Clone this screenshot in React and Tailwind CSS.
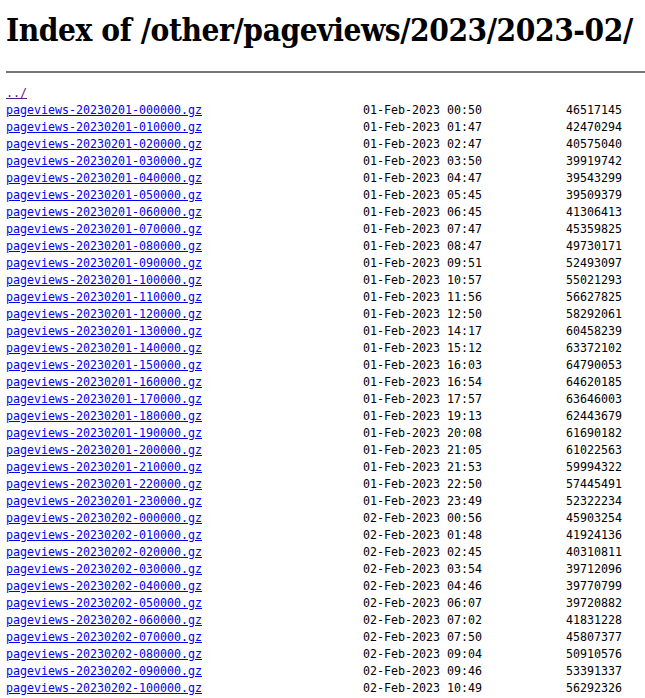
const ROWS = [
  ['20230201-000000', '01-Feb-2023 00:50', '46517145'],
  ['20230201-010000', '01-Feb-2023 01:47', '42470294'],
  ['20230201-020000', '01-Feb-2023 02:47', '40575040'],
  ['20230201-030000', '01-Feb-2023 03:50', '39919742'],
  ['20230201-040000', '01-Feb-2023 04:47', '39543299'],
  ['20230201-050000', '01-Feb-2023 05:45', '39509379'],
  ['20230201-060000', '01-Feb-2023 06:45', '41306413'],
  ['20230201-070000', '01-Feb-2023 07:47', '45359825'],
  ['20230201-080000', '01-Feb-2023 08:47', '49730171'],
  ['20230201-090000', '01-Feb-2023 09:51', '52493097'],
  ['20230201-100000', '01-Feb-2023 10:57', '55021293'],
  ['20230201-110000', '01-Feb-2023 11:56', '56627825'],
  ['20230201-120000', '01-Feb-2023 12:50', '58292061'],
  ['20230201-130000', '01-Feb-2023 14:17', '60458239'],
  ['20230201-140000', '01-Feb-2023 15:12', '63372102'],
  ['20230201-150000', '01-Feb-2023 16:03', '64790053'],
  ['20230201-160000', '01-Feb-2023 16:54', '64620185'],
  ['20230201-170000', '01-Feb-2023 17:57', '63646003'],
  ['20230201-180000', '01-Feb-2023 19:13', '62443679'],
  ['20230201-190000', '01-Feb-2023 20:08', '61690182'],
  ['20230201-200000', '01-Feb-2023 21:05', '61022563'],
  ['20230201-210000', '01-Feb-2023 21:53', '59994322'],
  ['20230201-220000', '01-Feb-2023 22:50', '57445491'],
  ['20230201-230000', '01-Feb-2023 23:49', '52322234'],
  ['20230202-000000', '02-Feb-2023 00:56', '45903254'],
  ['20230202-010000', '02-Feb-2023 01:48', '41924136'],
  ['20230202-020000', '02-Feb-2023 02:45', '40310811'],
  ['20230202-030000', '02-Feb-2023 03:54', '39712096'],
  ['20230202-040000', '02-Feb-2023 04:46', '39770799'],
  ['20230202-050000', '02-Feb-2023 06:07', '39720882'],
  ['20230202-060000', '02-Feb-2023 07:02', '41831228'],
  ['20230202-070000', '02-Feb-2023 07:50', '45807377'],
  ['20230202-080000', '02-Feb-2023 09:04', '50910576'],
  ['20230202-090000', '02-Feb-2023 09:46', '53391337'],
  ['20230202-100000', '02-Feb-2023 10:49', '56292326'],
]

export default function App() {
  return (
    <div className="bg-white text-black px-[6px] overflow-hidden">
      <h1 className="pt-[11px] h-[49px] whitespace-nowrap">
        <span className="inline-block origin-left [transform:scaleX(0.881)] font-['DejaVu_Serif',serif] font-bold text-[32px] leading-[38px] tracking-[-0.5px]">
          Index of /other/pageviews/2023/2023-02/
        </span>
      </h1>
      <hr className="mt-[22px] mr-[-6px] border-0 border-t-2 border-[#777]" />
      <pre className="mt-[12px] font-['DejaVu_Sans_Mono',monospace] text-[11.63px] leading-[17px]">
        <a href="#" className="text-[#551a8b] underline">../</a>{'\n'}
        {ROWS.map(([stamp, date, size]) => {
          const name = `pageviews-${stamp}.gz`
          return (
            <span key={stamp}>
              <a href="#" className="text-[#0000ee] underline">{name}</a>
              {' '.repeat(51 - name.length) + date + size.padStart(20, ' ') + '\n'}
            </span>
          )
        })}
      </pre>
    </div>
  )
}
